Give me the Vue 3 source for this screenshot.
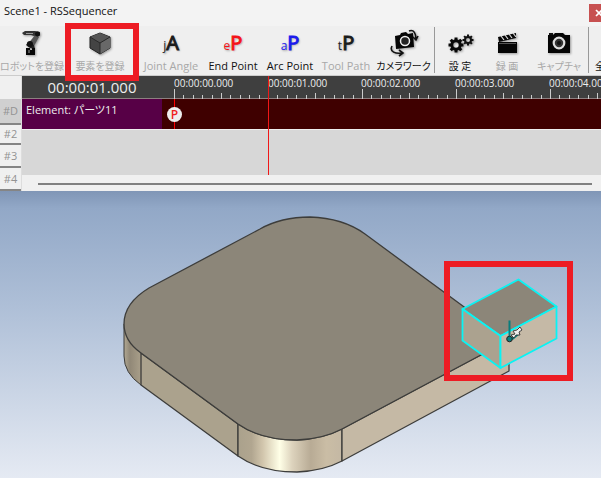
<script setup>
const second = 94
const ticks = Array.from({ length: 120 }, (_, i) => ({
  x: Math.round(12 + (i * second) / 10) + 0.5,
  top: i % 10 === 0 ? 13 : i % 5 === 0 ? 17 : 19,
}))
const labels = Array.from({ length: 5 }, (_, i) => ({
  x: 12 + i * second - (i > 1 ? 1 : 0),
  text: `00:00:${String(i).padStart(2, '0')}.000`,
}))
const tracks = ['#D', '#2', '#3', '#4']
const teeth = [0, 45, 90, 135, 180, 225, 270, 315]
</script>

<template>
  <main class="app">
    <header class="titlebar">
      <h1>Scene1 - RSSequencer</h1>
      <button class="close" type="button" aria-label="Close">
        <svg width="8" height="8" viewBox="0 0 8 8"><path d="M1 1l6 6M7 1L1 7" stroke="#fff" stroke-width="1.7" /></svg>
      </button>
    </header>

    <nav class="toolbar">
      <button class="tool" type="button" disabled>
        <svg class="icon" width="28" height="28" viewBox="0 0 28 28">
          <path d="M4 4L7 2H17L22 3L22 6L19 8L13 6L6 6Z" fill="#333" />
          <path d="M17 6L21 8L16 17L10 15Z" fill="#555" />
          <path d="M10 13L16 16L17 20L12 19L8 16Z" fill="#222" />
          <circle cx="19.500" cy="5" r="2.500" fill="#111" /><circle cx="12" cy="15" r="3" fill="#111" />
          <path d="M8 19H12V21H14V19H17V26H8Z" fill="#080808" />
          <path d="M8 4.500H15M11 21V24" stroke="#999" />
        </svg>
        <span>ロボットを登録</span>
      </button>
      <div class="slot">
        <button class="tool" type="button" disabled>
          <svg class="icon" width="28" height="28" viewBox="0 0 28 28">
            <path d="M14 4L24 8V19L14 25L4 19V8Z" fill="#444" stroke="#222" />
            <path d="M14 4L24 8L14 14L4 8Z" fill="#555" />
            <path d="M14 14L24 8V19L14 25Z" fill="#686868" />
            <path d="M4 8L14 14L24 8M14 14V25" fill="none" stroke="#292929" />
          </svg>
          <span>要素を登録</span>
        </button>
        <div class="callout"></div>
      </div>
      <button class="tool latin" type="button" disabled><span class="glyph dark"><small>j</small>A</span><span>Joint Angle</span></button>
      <button class="tool latin" type="button"><span class="glyph red"><small>e</small>P</span><span>End Point</span></button>
      <button class="tool latin" type="button"><span class="glyph blue"><small>a</small>P</span><span>Arc Point</span></button>
      <button class="tool latin" type="button" disabled><span class="glyph dark"><small>t</small>P</span><span>Tool Path</span></button>
      <button class="tool divided" type="button">
        <svg class="icon" width="30" height="28" viewBox="0 0 30 28">
          <path d="M6 7L11 6L12 4L17 3L19 5L24 4L25 18L7 20Z" fill="#050505" />
          <circle cx="16" cy="12" r="4.500" fill="#222" stroke="#eee" stroke-width="1.500" />
          <path d="M20 2C25 0 27 5 27 10M24 8L27 11L29 7M3 17C0 23 7 25 13 24M10 21L14 24L10 27" fill="none" stroke="#111" stroke-width="1.600" />
        </svg>
        <span>カメラワーク</span>
      </button>
      <button class="tool" type="button">
        <svg class="icon" width="28" height="28" viewBox="0 0 28 28">
          <g transform="translate(10 16)">
            <path v-for="a in teeth" :key="a" :transform="`rotate(${a})`" d="M-1.500 -7.500H1.500V-4H-1.500Z" fill="#090909" />
            <circle r="4.200" fill="none" stroke="#090909" stroke-width="3" />
          </g>
          <g transform="translate(22 11)">
            <path v-for="a in teeth" :key="a" :transform="`rotate(${a})`" d="M-1 -5.500H1V-3H-1Z" fill="#111" />
            <circle r="3" fill="none" stroke="#111" stroke-width="2" />
          </g>
        </svg>
        <span>設 定</span>
      </button>
      <button class="tool" type="button" disabled>
        <svg class="icon" width="28" height="28" viewBox="0 0 28 28">
          <path d="M5 8L23 4V9L6 13Z" fill="#070707" />
          <path d="M8 7L11 11M12 6L15 10M16 5L19 9M20 4L23 8" stroke="#ddd" stroke-width="1.200" />
          <path d="M5 13H24V24H5Z" fill="#050505" /><path d="M6 14.500H23" stroke="#777" stroke-width=".7" />
        </svg>
        <span>録 画</span>
      </button>
      <button class="tool divided" type="button" disabled>
        <svg class="icon" width="28" height="28" viewBox="0 0 28 28">
          <path d="M3 6H8L10 4H18L20 6H25V24H3Z" fill="#050505" /><path d="M4 5H8" stroke="#111" stroke-width="2" />
          <circle cx="14" cy="14" r="5.300" fill="#333" stroke="#ddd" stroke-width="2.200" /><circle cx="14" cy="14" r="2" fill="#111" />
        </svg>
        <span>キャプチャ</span>
      </button>
      <button class="tool last" type="button"><span>全</span></button>
    </nav>

    <section class="timeline">
      <div class="track-names">
        <span class="corner"></span>
        <button v-for="name in tracks" :key="name" type="button">{{ name }}</button>
      </div>
      <div class="lanes">
        <div class="ruler">
          <output class="clock">00:00:01.000</output>
          <svg class="scale" height="23">
            <text v-for="l in labels" :key="l.text" :x="l.x" y="11">{{ l.text }}</text>
            <path v-for="t in ticks" :key="t.x" :d="`M${t.x} ${t.top}V23`" />
          </svg>
        </div>
        <div class="lane">
          <div class="clip">Element: パーツ11</div>
          <div class="keys"><span class="key">P</span></div>
        </div>
        <div class="empty"></div>
        <div class="scroll"><div class="thumb"></div></div>
        <div class="playhead"></div>
      </div>
    </section>

    <svg class="viewport" viewBox="0 191 601 287" role="img" aria-label="3D view">
      <defs>
        <linearGradient id="sky" x1="0" y1="0" x2="0" y2="1">
          <stop offset="0" stop-color="#8096b6" /><stop offset=".06" stop-color="#92a8c7" />
          <stop offset=".4" stop-color="#aebfd7" /><stop offset="1" stop-color="#e5eaf3" />
        </linearGradient>
        <linearGradient id="left" x1="124" y1="0" x2="141" y2="0" gradientUnits="userSpaceOnUse">
          <stop offset="0" stop-color="#b1a893" /><stop offset=".35" stop-color="#918877" /><stop offset="1" stop-color="#a99f8a" />
        </linearGradient>
        <linearGradient id="front" x1="238" y1="0" x2="342" y2="0" gradientUnits="userSpaceOnUse">
          <stop offset="0" stop-color="#aaa18c" /><stop offset=".13" stop-color="#b1a690" /><stop offset=".24" stop-color="#d2c6ad" />
          <stop offset=".4" stop-color="#ffffe7" /><stop offset=".52" stop-color="#ddd3bd" /><stop offset=".7" stop-color="#b8ab95" /><stop offset=".85" stop-color="#cabda5" /><stop offset="1" stop-color="#c4b8a4" />
        </linearGradient>
      </defs>
      <rect y="191" width="601" height="287" fill="url(#sky)" />
      <g stroke="#3d3d3b" stroke-width="1.300" stroke-linejoin="round">
        <path d="M124 324V356Q124 373 141 385V353Z" fill="url(#left)" stroke="none" />
        <path d="M141 353L238 424V456L141 385Z" fill="#aba28d" />
        <path d="M238 424Q261 440 297 440Q323 439 342 429V461Q323 471 297 472Q261 472 238 456Z" fill="url(#front)" />
        <path d="M342 429L509 340V371L342 461Z" fill="#c5b9a5" />
        <path d="M124 324V356Q124 373 141 385" fill="none" stroke-width="1" />
        <path d="M260 229Q281 217 310 217Q343 218 365 234L509 340L342 429Q323 439 297 440Q261 440 238 424L141 353Q124 341 124 324Q124 303 149 288Z" fill="#8c8679" />
      </g>
      <g stroke="#08f4f4" stroke-width="1.800" stroke-linejoin="round">
        <path d="M462.500 309L518.500 279.500L556.500 306.500L500.500 336Z" fill="#8c8679" />
        <path d="M462.500 309L500.500 336V368L462.500 340.500Z" fill="#aba28f" />
        <path d="M500.500 336L556.500 306.500V338.500L500.500 368Z" fill="#c5b9a6" />
      </g>
      <path d="M509.500 320.500V338" stroke="#087d7d" stroke-width="2" />
      <path d="M512 339L518 334" stroke="#087d7d" stroke-width="2.500" />
      <circle cx="509.500" cy="339" r="2.800" fill="#087d7d" stroke="#222" />
      <path d="M511 335L515 334L513 331L517 330L520 327L522 330L519 332L520 335L516 335L514 338Z" fill="#eee" stroke="#333" stroke-width=".9" />
      <rect x="447" y="264" width="123" height="114" fill="none" stroke="#ed1c24" stroke-width="6" />
    </svg>
  </main>
</template>

<style>
body { margin: 0; background: #e5eaf3; }
</style>

<style scoped>
* { box-sizing: border-box; }
.app { overflow: hidden; font-family: "Open Sans", "Noto Sans CJK JP", sans-serif; font-size: 11px; color: #111; background: #f0f0f0; }
button { font: inherit; border: 0; padding: 0; color: inherit; background: none; }
.titlebar { display: flex; align-items: center; justify-content: space-between; height: 26px; padding-left: 4px; background: #f3f3f3; }
h1 { margin: 0; font-size: 11px; font-weight: 400; line-height: 20px; padding-bottom: 4px; }
.close { display: flex; align-items: center; height: 18px; width: 12px; padding-left: 6px; background: #c75050; overflow: hidden; }
.close svg { flex: none; }
.toolbar { display: grid; grid-template-columns: 64px 72px 70px 54px 60px 52px 63px 50px 44px 60px 1fr; grid-template-rows: 49px; height: 50px; background: #efefef; border-bottom: 1px solid #ccc; }
.tool { display: flex; flex-direction: column; align-items: center; justify-content: flex-start; min-width: 0; width: 100%; padding-top: 3px; font-size: 10px; line-height: 18px; white-space: nowrap; font-feature-settings: "palt"; }
.tool.latin { font-size: 11px; }
.tool:disabled { color: #a8a8a8; }
.tool.last { align-items: flex-start; padding-top: 31px; padding-left: 6px; overflow: hidden; }
.divided { position: relative; }
.divided::after { content: ""; position: absolute; right: 0; top: 1px; bottom: 2px; width: 1px; background: #999; }
.slot { position: relative; display: flex; }
.callout { position: absolute; inset: -3px -3px -6px 1px; border: 6px solid #ed1c24; pointer-events: none; z-index: 3; }
.icon { display: block; flex: none; filter: drop-shadow(1px 1px 1px #999); }
.tool .glyph { height: 28px; font-size: 20px; line-height: 28px; text-shadow: 1px 1px 2px #999; -webkit-text-stroke: 1px currentColor; }
.glyph small { font-size: 12px; line-height: 12px; -webkit-text-stroke: 0; }
.dark { color: #1b1b1b; } .red { color: #f51218; } .blue { color: #1b19ed; }
.timeline { display: grid; grid-template-columns: 22px 1fr; }
.track-names { display: grid; grid-template-rows: 23px 26px 20px 23px 23px; border-right: 1px solid #ddd; }
.track-names button { color: #939393; font-size: 11px; line-height: 16px; border-bottom: 2px solid #858585; }
.track-names button:nth-child(2) { background: #d0d0d0; }
.lanes { position: relative; min-width: 0; }
.ruler { display: grid; grid-template-columns: 140px 1fr; height: 23px; background: #3f3f3f; color: #eee; border-bottom: 1px solid #8c8080; }
.clock { font-size: 15px; line-height: 23px; text-align: center; }
.scale { display: block; width: 100%; overflow: hidden; }
.scale text { font-size: 10px; fill: #eee; }
.scale path { stroke: #ccc; stroke-width: 1; }
.lane { display: grid; grid-template-columns: 140px 1fr; height: 31px; border-bottom: 1px solid #eee; }
.clip { background: #570046; color: #eee; padding-left: 4px; font-size: 11px; line-height: 22px; white-space: nowrap; font-feature-settings: "palt"; }
.keys { position: relative; display: flex; align-items: center; padding-left: 5px; background: #3f0000; }
.keys::before { content: ""; position: absolute; left: 12px; top: 0; bottom: 0; width: 1px; background: #f00; }
.key { position: relative; width: 15px; height: 15px; border-radius: 50%; background: #eee; color: #f02020; font-size: 12px; font-weight: 600; line-height: 15px; text-align: center; }
.empty { height: 45px; background: #d7d7d7; }
.scroll { height: 16px; padding: 8px 9px 0 16px; background: #f0f0f0; }
.thumb { height: 2px; background: #808080; }
.playhead { position: absolute; left: 246px; top: 0; height: 99px; width: 1px; background: #f01818; }
.viewport { display: block; width: 100%; height: auto; }
</style>
